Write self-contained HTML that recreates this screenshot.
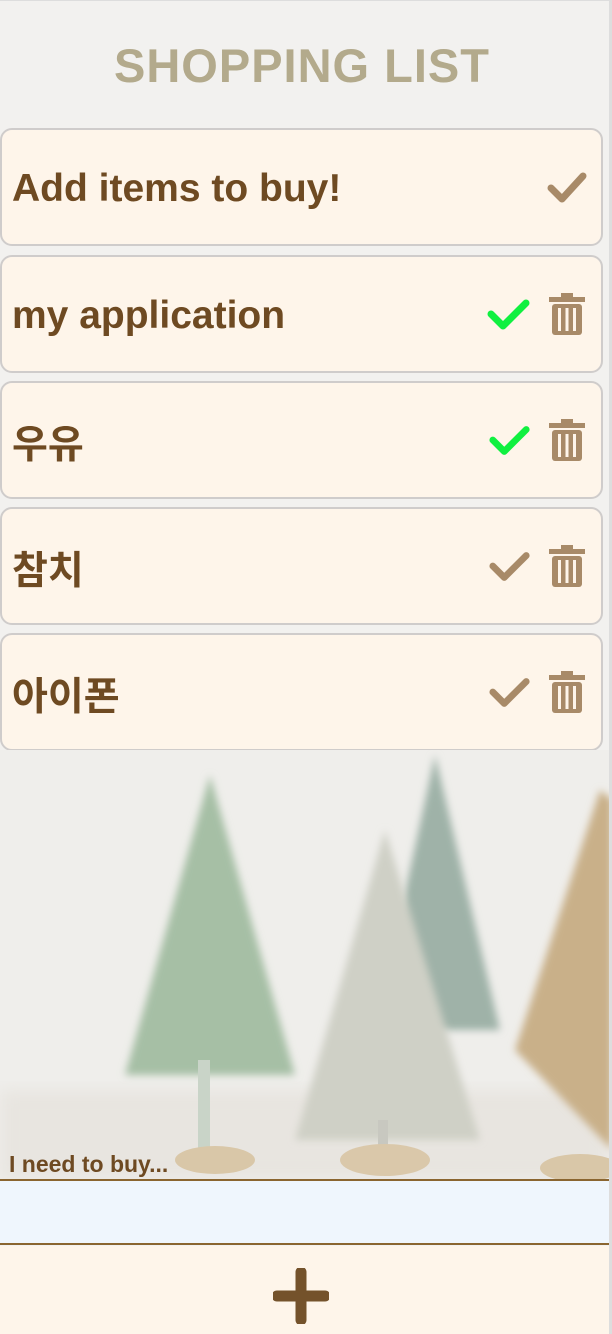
<!DOCTYPE html>
<html><head><meta charset="utf-8"><style>
*{margin:0;padding:0;box-sizing:border-box}
body{width:612px;height:1334px;overflow:hidden;background:#f2f1ef;font-family:"Liberation Sans","Noto Sans CJK KR",sans-serif;position:relative}
.frame{position:absolute;left:0;top:0;width:612px;height:1334px;border-top:1px solid #ddd;border-right:3px solid #ddd;pointer-events:none;z-index:5}
h1{position:absolute;top:38px;left:0;width:604px;text-align:center;font-size:47px;font-weight:bold;color:#b3aa8c;letter-spacing:1px}
.card{position:absolute;left:0;width:603px;height:118px;background:#fef5ea;border:2px solid #cfcccb;border-radius:12px}
.card span{position:absolute;left:10px;top:52%;transform:translateY(-50%);font-size:39px;font-weight:bold;color:#6e4a22}
.ic{position:absolute;top:50%;transform:translateY(-50%)}
.bg{position:absolute;left:0;top:750px;width:609px;height:430px;overflow:hidden;background:#f0efec}
.lbl{position:absolute;left:9px;top:1151px;font-size:23px;font-weight:bold;color:#6e4a22;z-index:3}
.inp{position:absolute;left:0;top:1179px;width:609px;height:66px;background:#eff6fd;border-top:2px solid #8a6530;border-bottom:2px solid #8a6530}
.bot{position:absolute;left:0;top:1246px;width:609px;height:88px;background:#fef5ea}
</style></head><body>
<h1>SHOPPING LIST</h1>
<div class="card" style="top:128px"><span>Add items to buy!</span>
<svg class="ic" style="left:544px" width="42" height="34" viewBox="0 0 42 34"><path d="M5 18 L16 29 L37 6" fill="none" stroke="#a88a68" stroke-width="7" stroke-linecap="round" stroke-linejoin="round"/></svg></div>
<div class="card" style="top:255px"><span>my application</span>
<svg class="ic" style="left:484px" width="46" height="36" viewBox="0 0 46 36"><path d="M5 18 L17 30 L40 7" fill="none" stroke="#10f040" stroke-width="7" stroke-linecap="round" stroke-linejoin="round"/></svg>
<svg class="ic" style="left:546px" width="38" height="44" viewBox="0 0 38 44"><path d="M1 5h36v5H1z M13 1h12v4H13z" fill="#a88a68"/><rect x="4" y="12" width="30" height="31" rx="3" fill="#a88a68"/><rect x="10" y="16" width="3" height="23" fill="#fef5ea"/><rect x="17.5" y="16" width="3" height="23" fill="#fef5ea"/><rect x="25" y="16" width="3" height="23" fill="#fef5ea"/></svg></div>
<div class="card" style="top:381px"><span>우유</span>
<svg class="ic" style="left:486px" width="44" height="36" viewBox="0 0 46 36"><path d="M5 18 L17 30 L40 7" fill="none" stroke="#10f040" stroke-width="7" stroke-linecap="round" stroke-linejoin="round"/></svg>
<svg class="ic" style="left:546px" width="38" height="44" viewBox="0 0 38 44"><path d="M1 5h36v5H1z M13 1h12v4H13z" fill="#a88a68"/><rect x="4" y="12" width="30" height="31" rx="3" fill="#a88a68"/><rect x="10" y="16" width="3" height="23" fill="#fef5ea"/><rect x="17.5" y="16" width="3" height="23" fill="#fef5ea"/><rect x="25" y="16" width="3" height="23" fill="#fef5ea"/></svg></div>
<div class="card" style="top:507px"><span>참치</span>
<svg class="ic" style="left:486px" width="44" height="36" viewBox="0 0 46 36"><path d="M5 18 L17 30 L40 7" fill="none" stroke="#a88a68" stroke-width="7" stroke-linecap="round" stroke-linejoin="round"/></svg>
<svg class="ic" style="left:546px" width="38" height="44" viewBox="0 0 38 44"><path d="M1 5h36v5H1z M13 1h12v4H13z" fill="#a88a68"/><rect x="4" y="12" width="30" height="31" rx="3" fill="#a88a68"/><rect x="10" y="16" width="3" height="23" fill="#fef5ea"/><rect x="17.5" y="16" width="3" height="23" fill="#fef5ea"/><rect x="25" y="16" width="3" height="23" fill="#fef5ea"/></svg></div>
<div class="card" style="top:633px"><span>아이폰</span>
<svg class="ic" style="left:486px" width="44" height="36" viewBox="0 0 46 36"><path d="M5 18 L17 30 L40 7" fill="none" stroke="#a88a68" stroke-width="7" stroke-linecap="round" stroke-linejoin="round"/></svg>
<svg class="ic" style="left:546px" width="38" height="44" viewBox="0 0 38 44"><path d="M1 5h36v5H1z M13 1h12v4H13z" fill="#a88a68"/><rect x="4" y="12" width="30" height="31" rx="3" fill="#a88a68"/><rect x="10" y="16" width="3" height="23" fill="#fef5ea"/><rect x="17.5" y="16" width="3" height="23" fill="#fef5ea"/><rect x="25" y="16" width="3" height="23" fill="#fef5ea"/></svg></div>
<div class="bg"><svg width="609" height="430" viewBox="0 750 609 430">
<defs><filter id="b"><feGaussianBlur stdDeviation="4"/></filter><filter id="b2"><feGaussianBlur stdDeviation="8"/></filter></defs>
<rect x="0" y="750" width="609" height="430" fill="#efeeeb"/>
<rect x="0" y="1090" width="609" height="90" fill="#e8e5e0" filter="url(#b2)"/>
<polygon points="435,755 375,1030 500,1030" fill="#9fb2a8" filter="url(#b)"/>
<polygon points="210,775 125,1075 295,1075" fill="#a6bfa5" filter="url(#b)"/>
<rect x="198" y="1060" width="12" height="100" fill="#c9d4c8"/>
<ellipse cx="215" cy="1160" rx="40" ry="14" fill="#d9c7a8"/>
<polygon points="600,790 515,1050 612,1150 612,800" fill="#c9b089" filter="url(#b)"/>
<ellipse cx="580" cy="1168" rx="40" ry="14" fill="#d9c7a8"/>
<polygon points="385,830 295,1140 480,1140" fill="#cfd0c6" filter="url(#b)"/>
<rect x="378" y="1120" width="10" height="40" fill="#c8c8c0"/>
<ellipse cx="385" cy="1160" rx="45" ry="16" fill="#dac8aa"/>
</svg></div>
<div class="lbl">I need to buy...</div>
<div class="inp"></div>
<div class="bot"><svg style="position:absolute;left:273px;top:22px" width="56" height="56" viewBox="0 0 56 56"><path d="M28 4v48M4 28h48" stroke="#74522b" stroke-width="11" stroke-linecap="round"/></svg></div>
<div class="frame"></div>
</body></html>
